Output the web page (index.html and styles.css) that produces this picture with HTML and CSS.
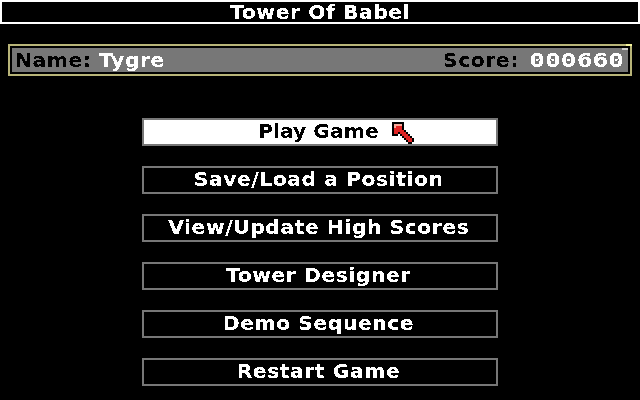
FILE: index.html
```html
<!DOCTYPE html>
<html lang="en">
<head>
  <meta charset="UTF-8" />
  <title>Tower Of Babel</title>
  <link rel="stylesheet" href="styles.css">
</head>
<body>
  <!-- hard text edges, like the bitmap font of the original -->
  <svg class="defs" width="0" height="0">
    <filter id="hard-edge" x="0" y="0" width="100%" height="100%">
      <feComponentTransfer>
        <feFuncA type="discrete" tableValues="0 1"></feFuncA>
      </feComponentTransfer>
    </filter>
  </svg>

  <header class="title-bar"><span class="txt">Tower Of Babel</span></header>

  <div class="status-frame">
    <div class="status-bar">
      <span class="txt from-left">Name: <span class="status-value">Tygre</span></span>
      <span class="score">
        <span class="txt from-right">Score:</span>
        <span class="txt from-right status-value score-digits">000660</span>
      </span>
    </div>
  </div>

  <nav class="menu">
    <button class="menu-btn active">
      <span class="txt">Play Game</span>
      <svg class="pointer" width="22" height="22" viewBox="0 0 11 11" shape-rendering="crispEdges">
        <path fill="#000" d="M0 0h6v4h1v1h1v1h1v1h1v1h1v2h-1v1h-2v-1h-1v-1h-1v-1h-1v-1h-1v-1h-1v1h-3z"/>
        <path fill="#e02424" d="M2 2h3v2h1v1h1v1h1v1h1v1h1v2h-2v-1h-1v-1h-1v-1h-1v-1h-1v-1h-1v1h-2v-3h1z"/>
        <path fill="#f8a898" d="M1 1h4v1h-3v1h-1z"/>
      </svg>
    </button>
    <button class="menu-btn"><span class="txt">Save/Load a Position</span></button>
    <button class="menu-btn"><span class="txt">View/Update High Scores</span></button>
    <button class="menu-btn"><span class="txt">Tower Designer</span></button>
    <button class="menu-btn"><span class="txt">Demo Sequence</span></button>
    <button class="menu-btn"><span class="txt">Restart Game</span></button>
  </nav>
</body>
</html>
```

FILE: styles.css
```css
* {
  box-sizing: border-box;
}

body {
  margin: 0;
  width: 640px;
  height: 400px;
  overflow: hidden;
  background: #000;
  color: #fff;
  font-family: "DejaVu Sans", sans-serif;
  font-weight: bold;
  font-size: 19px;
  line-height: 20px;
  letter-spacing: 0.5px;
}

.defs {
  position: absolute;
}

/* the original font is wider than it is tall */
.txt {
  display: inline-block;
  white-space: nowrap;
  filter: url(#hard-edge);
  transform: scaleX(1.07);
}

.from-left {
  transform-origin: left center;
}

.from-right {
  transform-origin: right center;
}

.title-bar {
  height: 24px;
  border: 2px solid #fff;
  padding-bottom: 1px;
  display: flex;
  align-items: center;
  justify-content: center;
}

.status-frame {
  position: relative;
  margin: 20px 8px 0;
  height: 32px;
  border: 2px solid #b8b478;
  padding: 2px;
}

/* small glint in the top right corner */
.status-frame::before {
  content: '';
  position: absolute;
  top: -2px;
  right: -2px;
  width: 6px;
  height: 2px;
  background: #f4f49c;
}

.status-frame::after {
  content: '';
  position: absolute;
  top: 2px;
  right: 2px;
  width: 6px;
  height: 2px;
  background: #ccc;
}

.status-bar {
  height: 24px;
  background: #777;
  color: #000;
  padding: 0 4px 0 3px;
  display: flex;
  align-items: center;
  justify-content: space-between;
}

.status-value {
  color: #fff;
}

.score {
  display: flex;
  gap: 10px;
}

.score-digits {
  width: 95px;
  text-align: right;
  font-family: "DejaVu Sans Mono", monospace;
  letter-spacing: 0;
  transform: scaleX(1.38);
}

.menu {
  margin: 42px 142px 0;
  display: flex;
  flex-direction: column;
  gap: 20px;
}

.menu-btn {
  position: relative;
  height: 28px;
  padding: 0 3px 2px 0;
  background: #000;
  color: #fff;
  border: 2px solid #777;
  font: inherit;
  letter-spacing: inherit;
}

.menu-btn.active {
  background: #fff;
  color: #000;
  letter-spacing: 0;
}

.pointer {
  position: absolute;
  left: 248px;
  top: 2px;
}
```
